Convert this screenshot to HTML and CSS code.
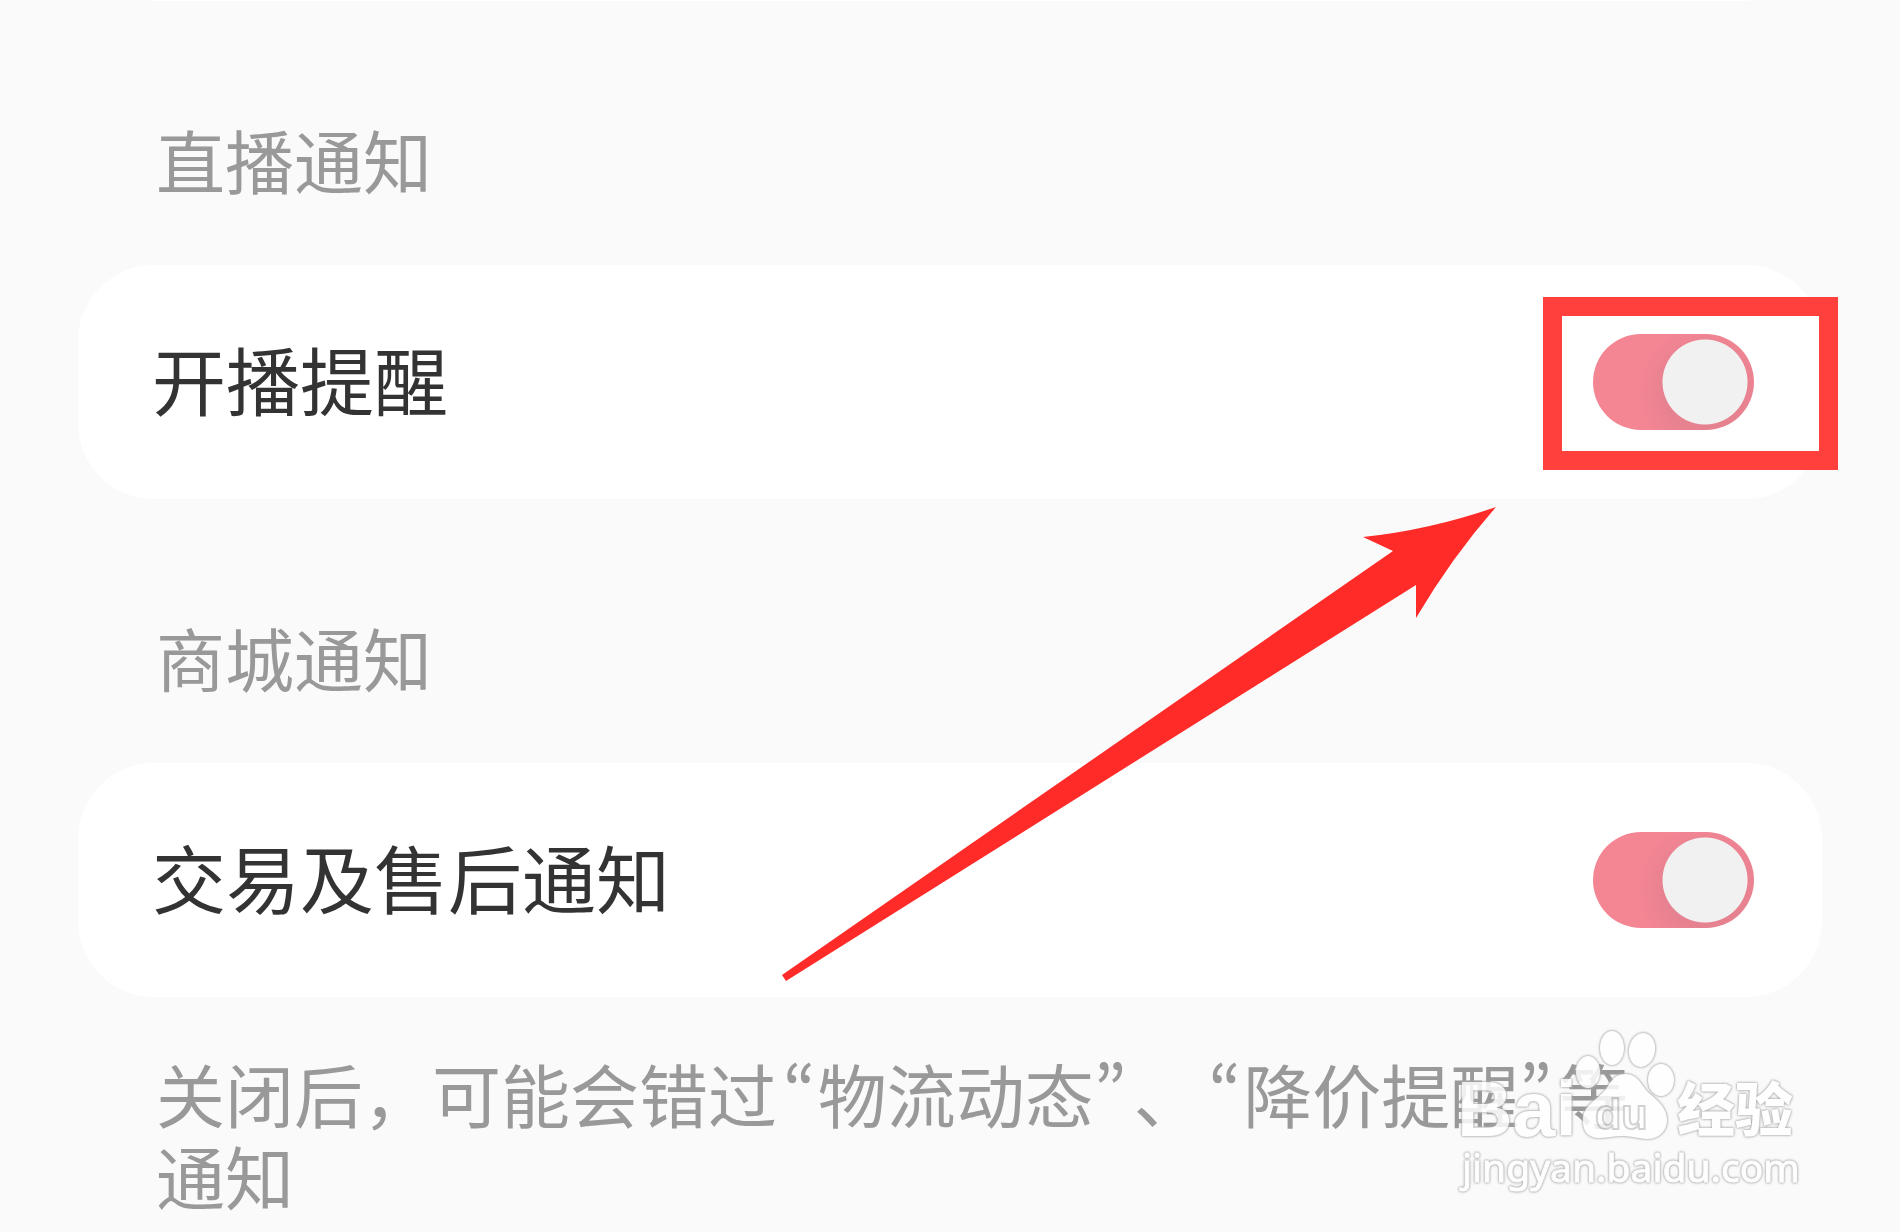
FILE: index.html
```html
<!DOCTYPE html>
<html lang="zh-CN">
<head>
<meta charset="utf-8">
<meta name="viewport" content="width=device-width, initial-scale=1">
<title>通知设置</title>
<link rel="stylesheet" href="styles.css">
</head>
<body>
<main class="page">
  <div class="previous-card"></div>

  <section class="group">
    <h2 class="group-title">直播通知</h2>
    <div class="card">
      <label class="card-label" for="live">开播提醒</label>
      <div class="switch-wrap">
        <input class="switch" id="live" type="checkbox" role="switch" checked>
        <span class="highlight"></span>
      </div>
    </div>
  </section>

  <section class="group">
    <h2 class="group-title">商城通知</h2>
    <div class="card">
      <label class="card-label" for="trade">交易及售后通知</label>
      <div class="switch-wrap">
        <input class="switch" id="trade" type="checkbox" role="switch" checked>
      </div>
    </div>
    <p class="note">关闭后，可能会错过<span class="quote-open">“</span>物流动态<span class="quote-close">”</span>、<span class="quote-open">“</span>降价提醒<span class="quote-close">”</span>等通知</p>
  </section>

  <svg class="arrow" viewBox="0 0 716 476" aria-hidden="true">
    <path fill="#ff2b28" d="M714 1Q648 24 581 31L611 45L0 469L4 475L634 79L634 112Q670 51 714 1Z"/>
  </svg>

  <svg class="watermark" viewBox="0 0 400 200" role="img" aria-label="Baidu经验 jingyan.baidu.com">
    <g class="mark">
      <text class="mark-bai" x="27" y="125">Bai</text>
      <ellipse cx="158" cy="61" rx="12" ry="16"/>
      <ellipse cx="182" cy="37" rx="12" ry="17"/>
      <ellipse cx="212" cy="39" rx="13" ry="17" transform="rotate(10 212 39)"/>
      <ellipse cx="231" cy="69" rx="13" ry="16"/>
      <path d="M195 63C203 63 208 67 213 75C219 85 237 92 237 109C237 121 228 128 217 128C209 128 203 125 193 125C184 125 177 127 169 127C157 127 152 119 153 107C154 93 171 87 178 75C183 67 187 63 195 63Z"/>
      <text class="mark-du" x="165" y="118">du</text>
      <text class="mark-jy" x="247" y="120">经验</text>
      <text class="mark-url" x="32" y="171">jingyan.baidu.com</text>
    </g>
  </svg>
</main>
</body>
</html>
```
FILE: styles.css
```css
* { box-sizing: border-box; }

body {
  margin: 0;
  background: #fafafa;
  color: #333;
  font-family: "Noto Sans CJK SC", sans-serif;
}

.page {
  position: relative;
  padding: 0 78px;
  overflow: hidden;
}

.previous-card {
  height: 1px;
  margin: 0 72px;
  background: #fff;
}

.group-title {
  margin: 0;
  padding: 108px 78px 56px;
  font-size: 69px;
  line-height: 100px;
  font-weight: 400;
  color: #999;
}

.card {
  display: flex;
  align-items: center;
  justify-content: space-between;
  padding: 64px 68px 64px 74px;
  border-radius: 76px;
  background: #fff;
}

.card-label {
  padding-bottom: 8px;
  font-size: 74px;
  line-height: 98px;
}

.switch-wrap {
  position: relative;
  display: flex;
}

.switch {
  appearance: none;
  width: 161px;
  height: 96px;
  margin: 0;
  border-radius: 48px;
  background:
    radial-gradient(circle at 112px 48px, #f1f1f1 42px, transparent 43px),
    radial-gradient(circle at 112px 58px, #e68190 38px, #f48593 66px);
}

.highlight {
  position: absolute;
  inset: -37px -84px -40px -50px;
  border: 19px solid #ff403d;
  pointer-events: none;
}

.note {
  margin: 0;
  padding: 55px 140px 11px 78px;
  font-size: 69px;
  line-height: 82px;
  color: #999;
}

.quote-open,
.quote-close {
  font-feature-settings: "pwid";
}

.quote-open { padding: 0 2px 0 6px; }
.quote-close { padding-right: 7px; }

.arrow {
  position: absolute;
  top: 506px;
  left: 782px;
  width: 716px;
  pointer-events: none;
}

.watermark {
  position: absolute;
  top: 1011px;
  right: 70px;
  width: 400px;
  pointer-events: none;
}

.mark {
  fill: #fff;
  opacity: 0.85;
  filter: drop-shadow(0 0 1px #999) drop-shadow(0 0 1px #bbb);
}

.mark-bai { font: bold 77px "Liberation Sans", sans-serif; }
.mark-du { font: bold 43px "Liberation Sans", sans-serif; stroke: #ccc; stroke-width: 2px; }
.mark-jy { font: 900 58px "Noto Sans CJK SC", sans-serif; }
.mark-url { font: 39px "Noto Sans", sans-serif; stroke: #fff; stroke-width: 1px; }
```
